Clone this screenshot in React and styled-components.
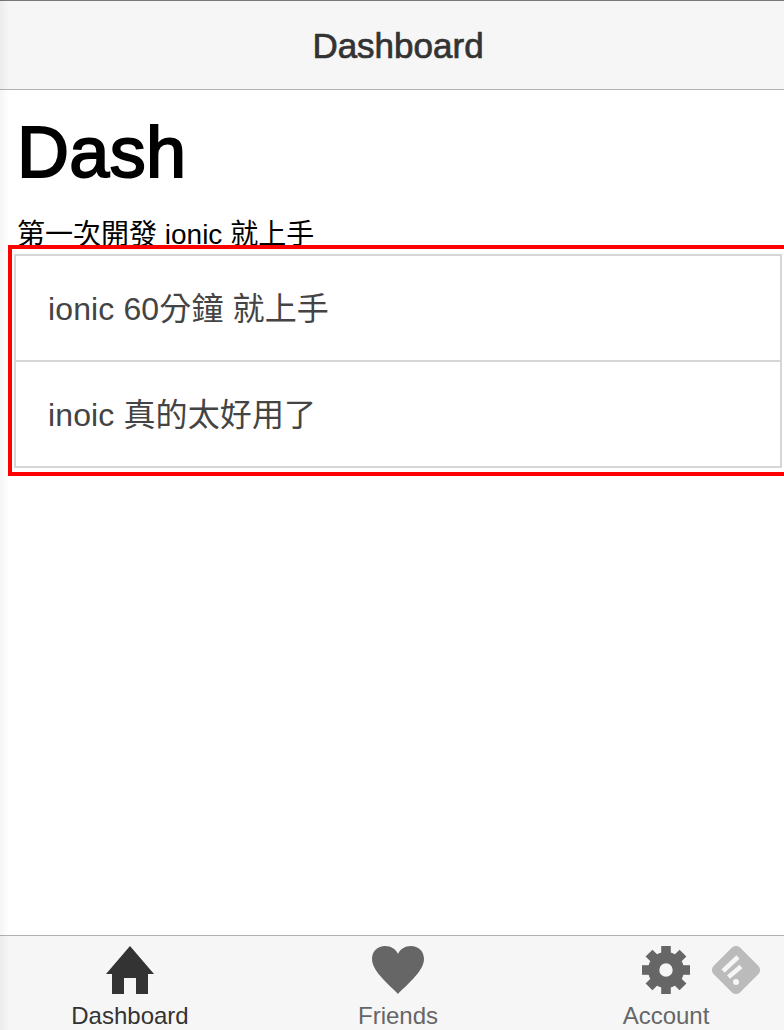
import React from "react";
import styled, { createGlobalStyle } from "styled-components";

const GlobalStyle = createGlobalStyle`
  html, body {
    margin: 0;
    padding: 0;
    height: 100%;
    overflow: hidden;
    background: #fff;
  }
  body {
    font-family: "Liberation Sans", "Noto Sans CJK TC", sans-serif;
  }
`;

const Page = styled.div`
  position: relative;
  width: 784px;
  height: 1030px;
  display: flex;
  flex-direction: column;
  overflow: hidden;
  &::before {
    content: "";
    position: absolute;
    top: 0;
    bottom: 0;
    left: 0;
    width: 9px;
    background: linear-gradient(to right, rgba(0, 0, 0, 0.045), rgba(0, 0, 0, 0));
    z-index: 5;
  }
`;

const NavBar = styled.header`
  box-sizing: border-box;
  flex: 0 0 90px;
  display: flex;
  align-items: center;
  justify-content: center;
  background: #f6f6f6;
  border-top: 1px solid #777;
  border-bottom: 1px solid #b2b2b2;
`;

const NavTitle = styled.h2`
  margin: 2px 0 0 12px;
  font-size: 35px;
  font-weight: 400;
  color: #333;
  -webkit-text-stroke: 0.7px #333;
`;

const Content = styled.main`
  flex: 1;
  padding: 0 0 0 17px;
  overflow: hidden;
`;

const Title = styled.h1`
  margin: 18px 0 0;
  font-size: 72px;
  line-height: 88px;
  font-weight: 400;
  letter-spacing: 0.3px;
  color: #000;
  -webkit-text-stroke: 2px #000;
`;

const Lead = styled.p`
  margin: 22px 0 0;
  font-size: 28px;
  line-height: 34px;
  color: #000;
`;

const Highlight = styled.section`
  box-sizing: border-box;
  width: 780px;
  margin: -7px 0 0 -9px;
  padding: 5px 2px 4px;
  border: 4px solid #f00;
  position: relative;
`;

const List = styled.ul`
  margin: 0;
  padding: 0;
  list-style: none;
`;

const Item = styled.li`
  box-sizing: border-box;
  height: 108px;
  padding: 0 32px 4px;
  display: flex;
  align-items: center;
  border: 2px solid #d6d6d6;
  font-size: 32px;
  letter-spacing: 0.12px;
  color: #444;
  background: #fff;
  & + & {
    margin-top: -2px;
  }
`;

const TabBar = styled.nav`
  box-sizing: border-box;
  flex: 0 0 95px;
  position: relative;
  background: #f6f6f6;
  border-top: 1px solid #b2b2b2;
  padding-top: 10px;
  display: grid;
  grid-template-columns: repeat(3, 268px);
`;

const Tab = styled.a`
  display: flex;
  flex-direction: column;
  align-items: center;
  gap: 8px;
  margin-left: -8px;
  font-size: 24px;
  line-height: 28px;
  color: ${(p) => (p.$active ? "#333" : "#666")};
  & svg {
    display: block;
    fill: currentColor;
  }
`;

const FeedlyBadge = styled.svg`
  position: absolute;
  left: 712px;
  top: 10px;
`;

const gearAngles = [0, 45, 90, 135, 180, 225, 270, 315];

function HomeIcon() {
  return (
    <svg width="48" height="48" viewBox="0 0 48 48">
      <path d="M24 0 L48 28 H42 V48 H30 V32 H18 V48 H6 V28 H0 Z" />
    </svg>
  );
}

function HeartIcon() {
  return (
    <svg width="52" height="48" viewBox="0 0 52 48">
      <path d="M26 48 C20 41 0 26 0 13 C0 5 6 0 13 0 C19 0 24 3 26 8 C28 3 33 0 39 0 C46 0 52 5 52 13 C52 26 32 41 26 48 Z" />
    </svg>
  );
}

function GearIcon() {
  return (
    <svg width="48" height="48" viewBox="0 0 48 48">
      {gearAngles.map((a) => (
        <rect key={a} x="19.2" y="0" width="9.6" height="12" transform={`rotate(${a} 24 24)`} />
      ))}
      <path
        fillRule="evenodd"
        d="M24 6 A18 18 0 1 1 24 42 A18 18 0 1 1 24 6 Z M24 17.3 A6.7 6.7 0 1 0 24 30.7 A6.7 6.7 0 1 0 24 17.3 Z"
      />
    </svg>
  );
}

export default function App() {
  return (
    <>
      <GlobalStyle />
      <Page>
        <NavBar>
          <NavTitle>Dashboard</NavTitle>
        </NavBar>
        <Content>
          <Title>Dash</Title>
          <Lead>第一次開發 ionic 就上手</Lead>
          <Highlight>
            <List>
              <Item>ionic 60分鐘 就上手</Item>
              <Item>inoic 真的太好用了</Item>
            </List>
          </Highlight>
        </Content>
        <TabBar>
          <Tab $active>
            <HomeIcon />
            Dashboard
          </Tab>
          <Tab>
            <HeartIcon />
            Friends
          </Tab>
          <Tab>
            <GearIcon />
            Account
          </Tab>
          <FeedlyBadge width="48" height="48" viewBox="0 0 48 48">
            <rect x="5.25" y="5.25" width="37.5" height="37.5" rx="6" fill="#bbb" transform="rotate(45 24 24)" />
            <g stroke="#f6f6f6" strokeWidth="4.5" fill="none">
              <path d="M11 25 L26 11" />
              <path d="M16.5 31 L29 20.5" />
            </g>
            <circle cx="24" cy="36" r="3" fill="#f6f6f6" />
          </FeedlyBadge>
        </TabBar>
      </Page>
    </>
  );
}
